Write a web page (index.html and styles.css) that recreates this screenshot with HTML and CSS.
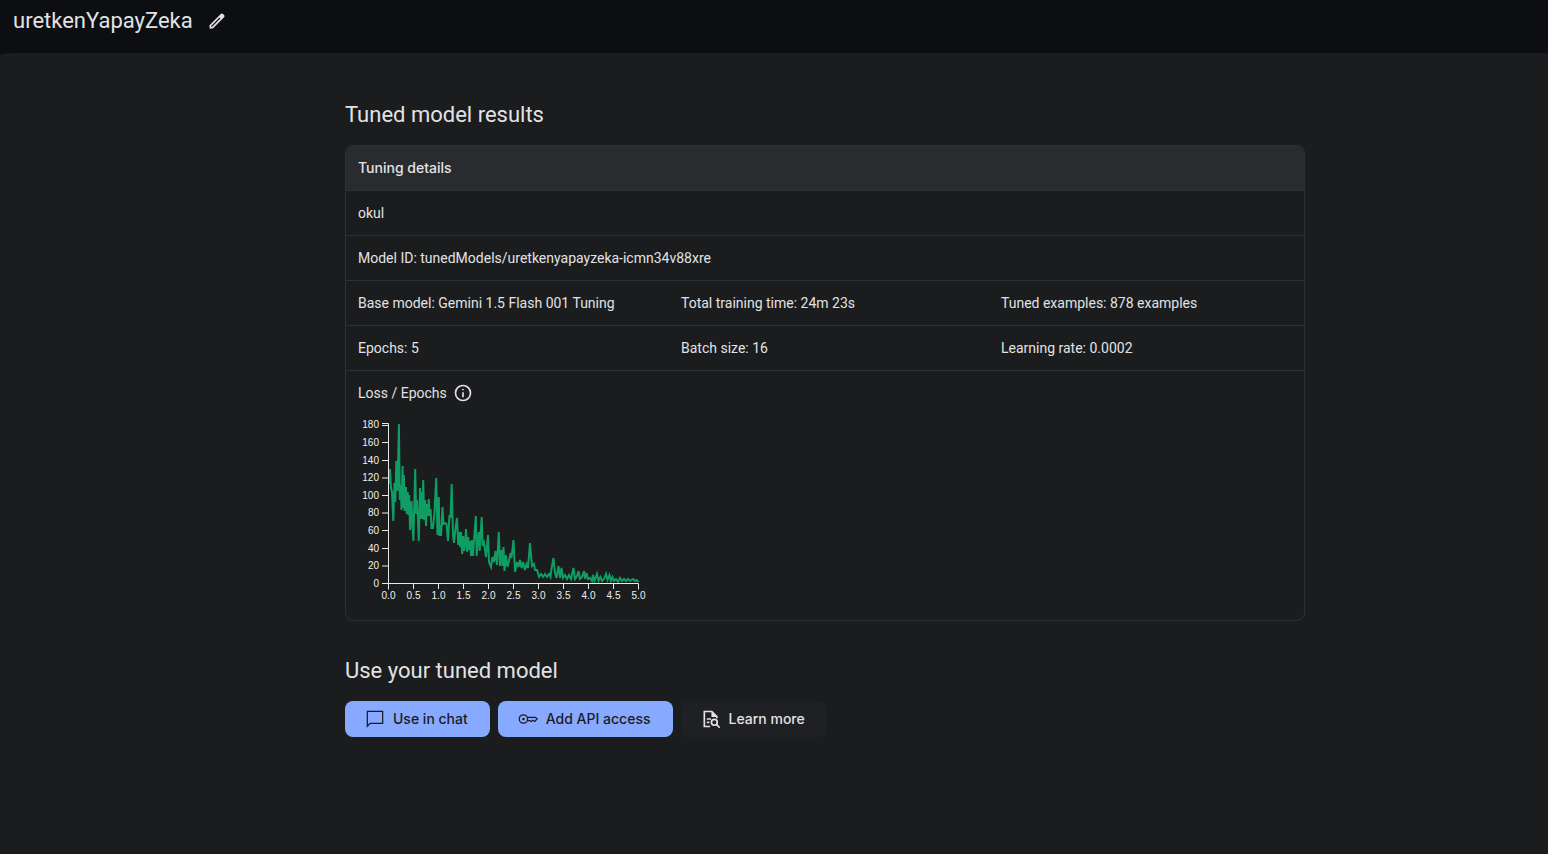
FILE: index.html
```html
<!DOCTYPE html>
<html lang="en">
<head>
<meta charset="utf-8">
<title>uretkenYapayZeka</title>
<link rel="stylesheet" href="styles.css">
</head>
<body>
<header class="topbar">
  <h1 class="topbar-title">uretkenYapayZeka</h1>
  <button class="icon-button" type="button" aria-label="Edit title">
    <svg width="20" height="20" viewBox="0 0 24 24" fill="currentColor" aria-hidden="true"><path d="M5 19h1.100l10-10L15 7.900l-10 10V19zm-2 2v-4L16.200 3.800q.7-.7 1.500-.8t1.600.6l1.100 1.100q.7.7.6 1.500T20.200 7.800L7 21H3z"/></svg>
  </button>
</header>
<main class="page">
  <div class="content">
    <h2 class="heading">Tuned model results</h2>
    <div class="card">
      <table class="details">
        <colgroup><col class="col-first"><col class="col-second"><col></colgroup>
        <thead><tr><th colspan="3" scope="colgroup">Tuning details</th></tr></thead>
        <tbody>
          <tr><td colspan="3">okul</td></tr>
          <tr><td colspan="3">Model ID: tunedModels/uretkenyapayzeka-icmn34v88xre</td></tr>
          <tr><td>Base model: Gemini 1.5 Flash 001 Tuning</td><td>Total training time: 24m 23s</td><td>Tuned examples: 878 examples</td></tr>
          <tr><td>Epochs: 5</td><td>Batch size: 16</td><td>Learning rate: 0.0002</td></tr>
        </tbody>
      </table>
      <section class="loss">
        <div class="loss-title">
          <span>Loss / Epochs</span>
          <button class="icon-button" type="button" aria-label="About loss">
            <svg width="20" height="20" viewBox="0 0 24 24" fill="currentColor" aria-hidden="true"><path d="M11 17h2v-6h-2v6zm1-8q.43 0 .71-.29T13 8t-.29-.71T12 7t-.71.290T11 8t.29.710T12 9zm0 13a10 10 0 1 1 0-20 10 10 0 0 1 0 20zm0-2a8 8 0 1 0 0-16 8 8 0 0 0 0 16z"/></svg>
          </button>
        </div>
        <svg class="chart" width="300" height="190" viewBox="358 417 300 190" role="img" aria-label="Loss per epoch">
          <polyline class="line" points="389.500,484 390,469 391,488 392,492 393.300,521 394.500,483 395.300,502 396.300,461 397.500,491 398.900,424 399.800,500 400.700,485 401.500,510 402.600,466 403.300,508 403.900,475 404.700,511 406,487 406.800,514 407.700,492 408.500,515 409.200,495 410,530 411.500,501 412.500,528 413.400,541 415.200,469 416.200,514 416.900,500 417.700,515 418.800,541 420,488 420.800,519 421.600,492 422.400,519 423.200,480 424.300,520 425.200,500 426,526 427,504 427.800,516 428.800,499 429.700,516 430.600,509 431.500,528 433,528 434.500,512 436.200,478 437.500,535 438.800,497 439.400,536 440.300,525 441,536 442.500,507 443.500,524 445,523 446.500,524 448,541 449.500,515 450.500,518 451.700,484 453,535 454,543 455.500,528 457,518 458.200,545 459.200,532 460.200,547 461,532 462.200,554 463.200,536 464.300,551 465.300,541 466,529 467.200,552 468.200,537 469.200,550 470.200,541 471,556 472,540 473,556 474,541 475.800,516 476.700,556 477.800,540 479,532 479.700,551 480.500,535 481.700,517 482.600,546 483.500,540 484.500,546 486,557 488,535 489,562 491,567 492.500,557 494,562 495.500,551 497,565 498.800,532 500,566 501.500,550 502.500,566 503.500,547 504.500,571 506,555 507.500,567 509,561 510.500,553 511.500,558 513.500,540 515,572 517,562 518.500,567 520,560 521.500,568 523,562 525,570 526.500,564 528,568 530,543 532,566 534,564 535,570 537,570 539,577 541,574 543,577 545,574 547,577 549,574 550.500,577 551.500,569 553.500,558 555,573 556.500,578 558.500,566 560,578 561.500,568 563,578 565,575 567,579 569,575 571,579 573.500,568 575,579 577,576 578.500,571 580,579 582,577 584,571 585,579 586.500,573 588,579 590,578 592,581 593,575 594.500,581 597,574 598.500,581 600.500,577 602,581 604,579 606,574 607.500,580 609.500,575 611,581 612.500,577 614,581 616,579 618,582 620,578 622,581 624,579 626,581 628,579 630,581 633,579 635,581 636.500,580 638.500,582"/>
          <g class="axis">
            <path d="M382 423.500h6.500V583.500H382M388.500 589.500v-6h250v6M382 566h6M382 548.500h6M382 530.500h6M382 513h6M382 495.500h6M382 478h6M382 460.500h6M382 442.500h6M382 425.500h6M413.500 583v6M438.500 583v6M463.500 583v6M488.500 583v6M513.500 583v6M538.500 583v6M563.500 583v6M588.500 583v6M613.500 583v6"/>
          </g>
          <g class="ticks ticks-y">
            <text x="379" y="587">0</text><text x="379" y="569">20</text><text x="379" y="552">40</text><text x="379" y="534">60</text><text x="379" y="516">80</text><text x="379" y="499">100</text><text x="379" y="481">120</text><text x="379" y="464">140</text><text x="379" y="446">160</text><text x="379" y="428">180</text>
          </g>
          <g class="ticks ticks-x">
            <text x="388.500" y="599">0.0</text><text x="413.500" y="599">0.5</text><text x="438.500" y="599">1.0</text><text x="463.500" y="599">1.5</text><text x="488.500" y="599">2.0</text><text x="513.500" y="599">2.5</text><text x="538.500" y="599">3.0</text><text x="563.500" y="599">3.5</text><text x="588.500" y="599">4.0</text><text x="613.500" y="599">4.5</text><text x="638.500" y="599">5.0</text>
          </g>
        </svg>
      </section>
    </div>
    <h2 class="heading heading-use">Use your tuned model</h2>
    <div class="actions">
      <button class="button primary" type="button">
        <svg width="20" height="20" viewBox="0 0 24 24" fill="none" stroke="currentColor" stroke-width="1.500" aria-hidden="true"><path d="M2.800 20.700V2.800h18.400v14.400H6.300z"/></svg>
        Use in chat
      </button>
      <button class="button primary" type="button">
        <svg width="20" height="20" viewBox="0 0 24 24" fill="none" stroke="currentColor" stroke-width="1.500" aria-hidden="true"><circle cx="6.500" cy="12" r="5"/><circle cx="6.500" cy="12" r="1.500" fill="currentColor" stroke="none"/><path d="M11 10h10l2 2-3 3-2.200-1.600-2.200 1.600-1.800-1.200H11"/></svg>
        Add API access
      </button>
      <button class="button secondary" type="button">
        <svg width="20" height="20" viewBox="0 0 24 24" fill="none" stroke="currentColor" stroke-width="2" aria-hidden="true"><path d="M11 21H4V3h9l6 6v2M7 12h5M7 16h3"/><path d="M12.500 2v7.500H20z" fill="currentColor" stroke="none"/><circle cx="16" cy="16" r="3.500"/><path d="M18.500 18.500l4 4"/></svg>
        Learn more
      </button>
    </div>
  </div>
</main>
</body>
</html>
```
FILE: styles.css
```css
* { box-sizing: border-box; }

body {
  margin: 0;
  min-height: 100vh;
  display: flex;
  flex-direction: column;
  background: #0c0e11;
  color: #e2e2e5;
  font-family: Roboto, "Liberation Sans", sans-serif;
  font-size: 14px;
  line-height: 20px;
}

.topbar {
  display: flex;
  align-items: center;
  gap: 14px;
  padding: 5px 13px 16px;
}

.topbar-title,
.heading {
  margin: 0;
  font-size: 22px;
  font-weight: 400;
  line-height: 32px;
}

.icon-button {
  display: flex;
  padding: 0;
  border: 0;
  background: none;
  color: inherit;
}

.page {
  flex: 1;
  padding: 46px 0 46px 102px;
  border-radius: 12px 0 0 0 / 2px 0 0 0;
  background: #1b1c1d;
}

.content {
  max-width: 960px;
  margin: 0 auto;
}

.card {
  margin-top: 14px;
  border: 1px solid #2f3033;
  border-radius: 8px;
  overflow: hidden;
}

.details {
  width: 100%;
  table-layout: fixed;
  border-collapse: separate;
  border-spacing: 0;
}

.col-first { width: 323px; }
.col-second { width: 320px; }

.details th,
.details td {
  height: 45px;
  padding: 0 12px;
  border-bottom: 1px solid #2f3033;
  text-align: left;
  white-space: nowrap;
}

.details th {
  background: #2a2b2e;
  font-family: Inter, "Liberation Sans", sans-serif;
  font-weight: 500;
}

.loss { padding: 12px 12px 13px; }

.loss-title {
  display: flex;
  align-items: center;
  gap: 6px;
}

.chart {
  display: block;
  margin-top: 14px;
}

.axis {
  fill: none;
  stroke: #e8e8e8;
  stroke-width: 1;
}

.ticks {
  fill: #f0f0f0;
  font-family: "Liberation Sans", Arial, sans-serif;
  font-size: 10px;
}

.ticks-y { text-anchor: end; }
.ticks-x { text-anchor: middle; }

.line {
  fill: none;
  stroke: #0f9d63;
  stroke-width: 2;
}

.heading-use { margin-top: 34px; }

.actions {
  display: flex;
  flex-wrap: wrap;
  gap: 8px;
  margin-top: 14px;
}

.button {
  display: flex;
  align-items: center;
  gap: 8px;
  height: 36px;
  padding: 0 22px 0 20px;
  border: 0;
  border-radius: 8px;
  font-family: Inter, "Liberation Sans", sans-serif;
  font-size: 14px;
  font-weight: 500;
  line-height: 20px;
}

.primary {
  background: #87a9ff;
  color: #1b1c1d;
}

.secondary {
  background: #1f2023;
  color: #e2e2e5;
}
```
